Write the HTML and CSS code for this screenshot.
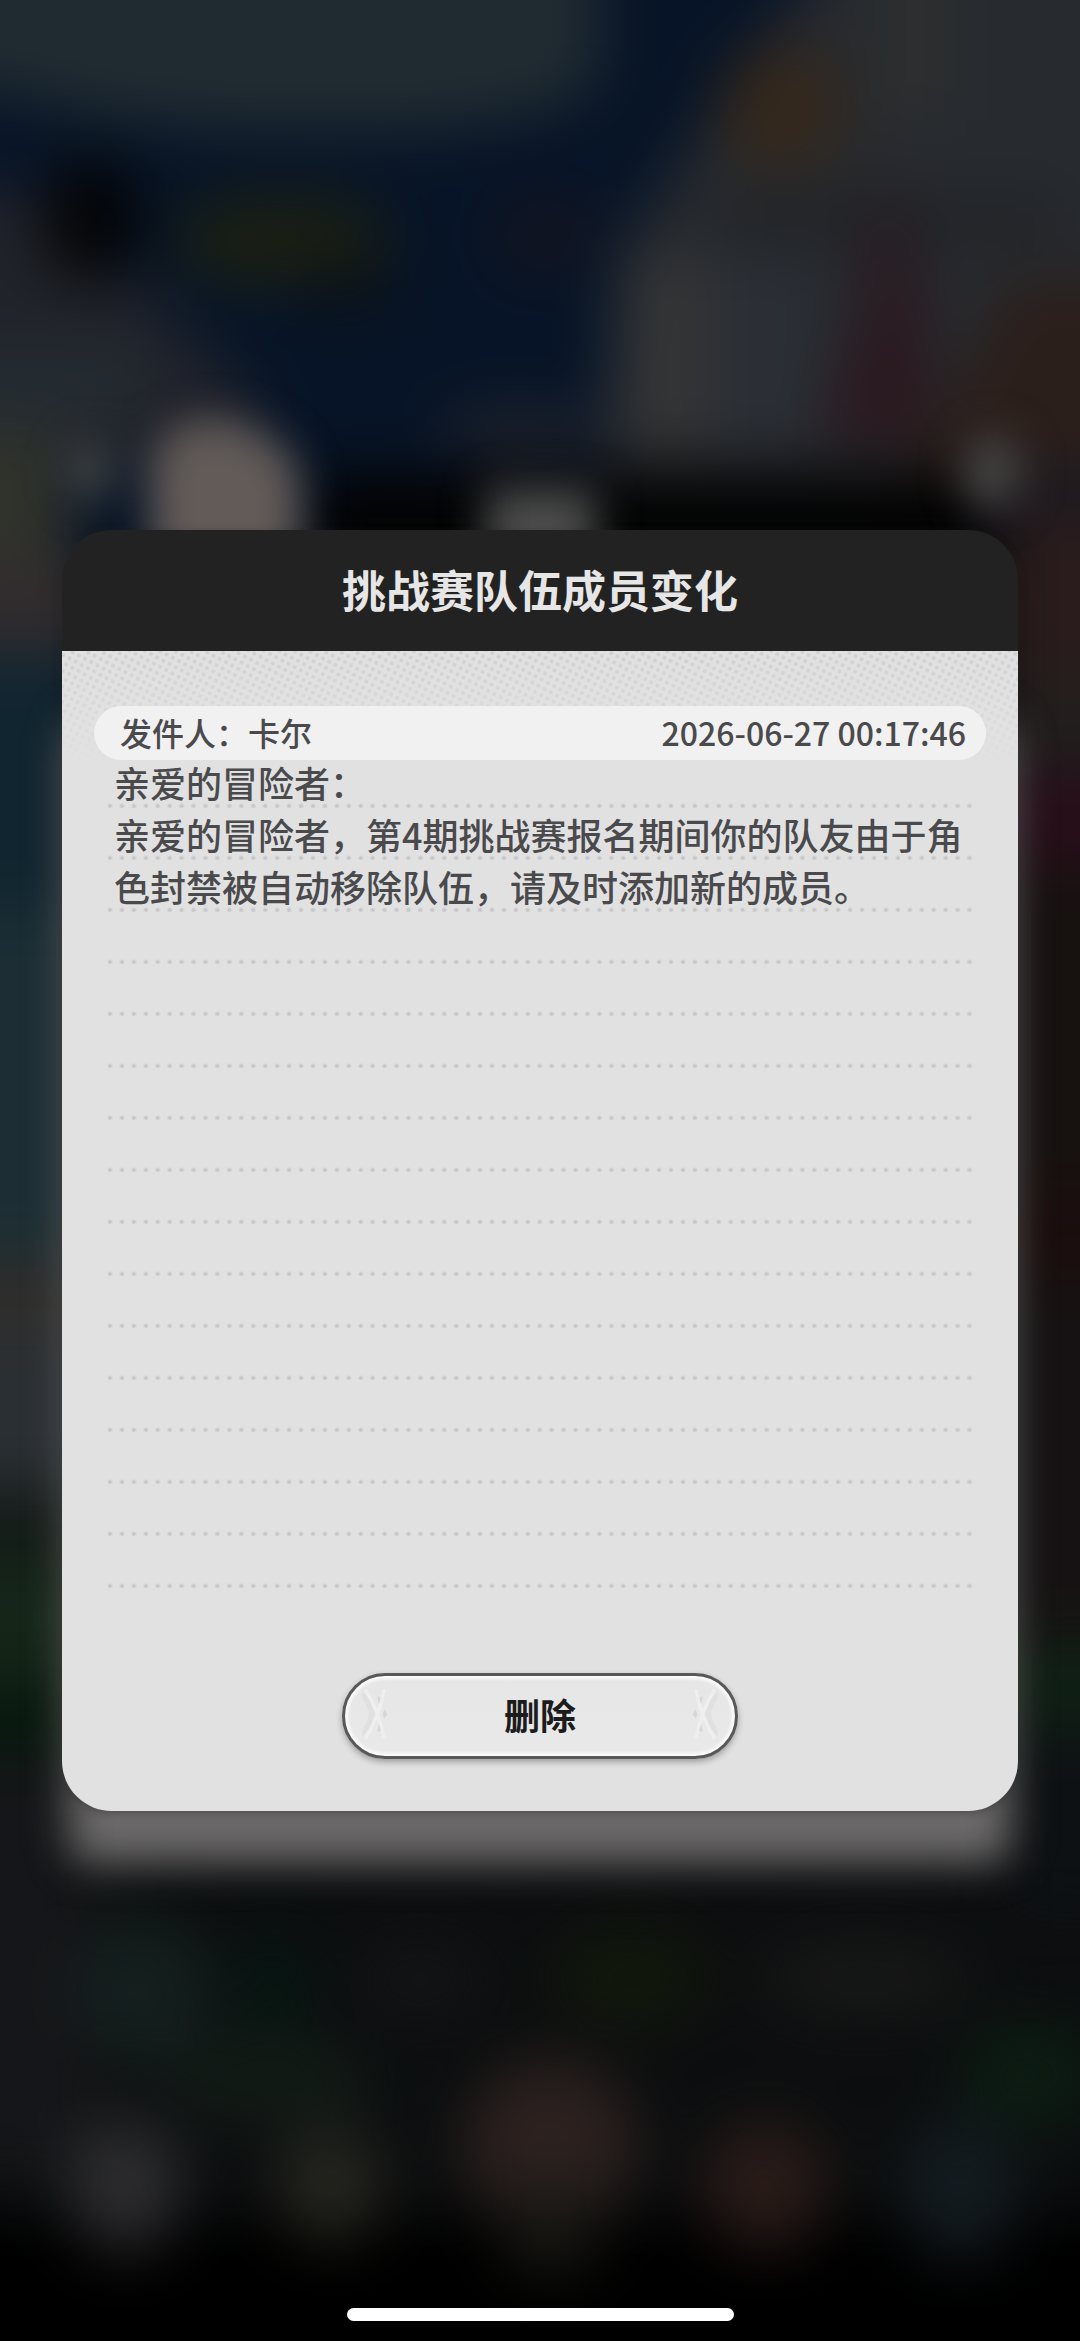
FILE: index.html
```html
<!DOCTYPE html>
<html lang="zh-CN">
<head>
<meta charset="utf-8">
<meta name="viewport" content="width=device-width, initial-scale=1">
<title>挑战赛队伍成员变化</title>
<link rel="stylesheet" href="styles.css">
</head>
<body>
<svg class="backdrop" viewBox="0 0 1080 2341" preserveAspectRatio="none" aria-hidden="true">
  <defs>
    <filter id="soft" x="-200" y="-200" width="1480" height="2741" filterUnits="userSpaceOnUse" color-interpolation-filters="sRGB"><feGaussianBlur stdDeviation="30"/></filter>
    <filter id="edge" x="-200" y="-200" width="1480" height="2741" filterUnits="userSpaceOnUse" color-interpolation-filters="sRGB"><feGaussianBlur stdDeviation="20"/></filter>
  </defs>
  <rect width="1080" height="2341" fill="#0c0e0f"/>
  <!-- scene behind the dialog -->
  <g filter="url(#soft)">
    <rect x="-80" y="-80" width="1240" height="640" fill="#071427"/>
    <path d="M-80-80H600V80Q560 130 330 132Q100 128 40 100L-80 80Z" fill="#202b31"/>
    <path d="M850-80H1160V480H600L620 250 700 130Z" fill="#272a2f"/>
    <rect x="880" y="-80" width="70" height="200" fill="#2d2f2f"/>
    <rect x="620" y="255" width="90" height="190" fill="#343536"/>
    <rect x="720" y="260" width="90" height="180" fill="#2b2f36"/>
    <rect x="720" y="200" width="340" height="40" fill="#202225"/>
    <ellipse cx="782" cy="108" rx="62" ry="66" fill="#34281c"/>
    <path d="M880 170L920 300 930 440H820L865 320Z" fill="#2b171e"/>
    <path d="M1010 280H1160V480H900L960 380Z" fill="#2b1f1b"/>
    <path d="M-80 190H40L160 300 270 420 240 470H-80Z" fill="#21232b"/>
    <rect x="-80" y="350" width="220" height="70" fill="#242c32"/>
    <ellipse cx="92" cy="220" rx="48" ry="62" fill="#030405"/>
    <ellipse cx="280" cy="240" rx="110" ry="46" fill="#1b2012"/>
    <ellipse cx="345" cy="285" rx="50" ry="25" fill="#0c1114"/>
    <ellipse cx="545" cy="235" rx="50" ry="40" fill="#131420"/>
    <ellipse cx="520" cy="435" rx="80" ry="24" fill="#22242b"/>
    <rect x="310" y="474" width="680" height="86" fill="#020202"/>
    <rect x="-80" y="430" width="150" height="140" fill="#30332b"/>
    <rect x="-80" y="560" width="180" height="90" fill="#322c2e"/>
    <rect x="-80" y="650" width="180" height="260" fill="#112530"/>
    <rect x="-80" y="910" width="180" height="350" fill="#1c2e34"/>
    <rect x="-80" y="1260" width="180" height="70" fill="#2f2d2a"/>
    <rect x="-80" y="1330" width="180" height="160" fill="#2a2f33"/>
    <rect x="-80" y="1490" width="180" height="70" fill="#131a17"/>
    <rect x="-80" y="1560" width="180" height="120" fill="#152619"/>
    <rect x="-80" y="1680" width="180" height="80" fill="#08180e"/>
    <rect x="-80" y="1760" width="180" height="420" fill="#151619"/>
    <rect x="1000" y="500" width="160" height="180" fill="#2a1c1c"/>
    <rect x="1000" y="680" width="160" height="90" fill="#221f1e"/>
    <rect x="1000" y="775" width="160" height="85" fill="#2a0e1b"/>
    <rect x="1000" y="860" width="160" height="330" fill="#171110"/>
    <rect x="1000" y="1190" width="160" height="90" fill="#1b0e0d"/>
    <rect x="1000" y="1280" width="160" height="360" fill="#161213"/>
    <rect x="1000" y="1640" width="160" height="90" fill="#0f2014"/>
    <rect x="1000" y="1730" width="160" height="190" fill="#0e1114"/>
    <rect x="-80" y="2215" width="1240" height="240" fill="#000"/>
    <ellipse cx="145" cy="1990" rx="70" ry="75" fill="#141f1e"/>
    <ellipse cx="275" cy="1985" rx="35" ry="50" fill="#061812"/>
    <ellipse cx="420" cy="1980" rx="65" ry="35" fill="#151517"/>
    <ellipse cx="630" cy="1978" rx="80" ry="50" fill="#12180c"/>
    <ellipse cx="865" cy="1978" rx="110" ry="45" fill="#161716"/>
    <ellipse cx="270" cy="2080" rx="110" ry="45" fill="#121b16"/>
    <ellipse cx="1030" cy="2075" rx="75" ry="55" fill="#0c1c13"/>
    <ellipse cx="550" cy="2145" rx="88" ry="88" fill="#2c211f"/>
    <ellipse cx="550" cy="2230" rx="50" ry="45" fill="#171713"/>
    <ellipse cx="125" cy="2185" rx="58" ry="66" fill="#2d2d30"/>
    <ellipse cx="330" cy="2185" rx="54" ry="56" fill="#262620"/>
    <ellipse cx="765" cy="2185" rx="62" ry="64" fill="#2a1c19"/>
    <ellipse cx="960" cy="2190" rx="58" ry="68" fill="#141c21"/>
  </g>
  <g filter="url(#edge)">
    <path d="M150 590V465Q160 418 220 418Q270 425 300 470V590Z" fill="#625b58"/>
    <rect x="486" y="488" width="110" height="100" fill="#4c4c4c"/>
    <ellipse cx="992" cy="472" rx="30" ry="38" fill="#464444"/>
    <ellipse cx="90" cy="470" rx="22" ry="30" fill="#404446"/>
    <rect x="68" y="720" width="944" height="1144" rx="24" fill="#6c6a6a"/>
  </g>
</svg>

<main class="screen">
  <section class="dialog" role="dialog" aria-labelledby="dialog-title">
    <header class="dialog-head">
      <h1 id="dialog-title">挑战赛队伍成员变化</h1>
    </header>
    <div class="dialog-body">
      <svg class="halftone" aria-hidden="true">
        <defs>
          <pattern id="dots" width="7" height="7" patternUnits="userSpaceOnUse" patternTransform="rotate(28)">
            <circle cx="3" cy="3" r="2" fill="#d0d0d2"/>
          </pattern>
        </defs>
        <rect width="100%" height="100%" fill="url(#dots)"/>
      </svg>
      <div class="meta">
        <span>发件人：卡尔</span>
        <time datetime="2026-06-27T00:17:46">2026-06-27 00:17:46</time>
      </div>
      <div class="letter">
        <p>亲爱的冒险者：</p>
        <p>亲爱的冒险者，第4期挑战赛报名期间你的队友由于角色封禁被自动移除队伍，请及时添加新的成员。</p>
      </div>
      <button class="delete" type="button">
        <svg class="flourish" viewBox="0 0 40 70" aria-hidden="true">
          <path d="M6 8Q24 28 24 35T6 62V54Q14 42 14 35T6 16Z" fill="#e0e0e0"/>
          <path d="M24 14L32 16 26 26ZM24 56L32 54 26 44ZM32 30L36 35 32 40 30 35Z" fill="#d6d6d6"/>
          <path d="M10 6Q27 35 32 64M32 6Q27 35 10 64" fill="none" stroke="#efefef" stroke-width="4"/>
        </svg>
        <span>删除</span>
        <svg class="flourish flipped" viewBox="0 0 40 70" aria-hidden="true">
          <path d="M6 8Q24 28 24 35T6 62V54Q14 42 14 35T6 16Z" fill="#e0e0e0"/>
          <path d="M24 14L32 16 26 26ZM24 56L32 54 26 44ZM32 30L36 35 32 40 30 35Z" fill="#d6d6d6"/>
          <path d="M10 6Q27 35 32 64M32 6Q27 35 10 64" fill="none" stroke="#efefef" stroke-width="4"/>
        </svg>
      </button>
    </div>
  </section>
</main>
<div class="home-indicator"></div>
</body>
</html>
```

FILE: styles.css
```css
* {
  box-sizing: border-box;
}

body {
  position: relative;
  margin: 0;
  min-height: 100vh;
  background: #000;
  color: #4a4a4c;
  font-family: "Noto Sans CJK SC", sans-serif;
  font-weight: 500;
}

.backdrop {
  position: absolute;
  inset: 0;
  width: 100%;
  height: 100%;
}

.screen {
  position: relative;
  display: flex;
  align-items: center;
  min-height: 100vh;
  padding: 0 62px;
}

.dialog {
  flex: 1;
  overflow: hidden;
  border-radius: 50px;
  background: linear-gradient(#222 121px, #e1e1e2 121px);
  box-shadow: 0 2px 8px rgba(34, 34, 34, 0.4);
}

.dialog-head {
  display: flex;
  align-items: center;
  justify-content: center;
  height: 121px;
  padding-bottom: 4px;
}

.dialog-head h1 {
  margin: 0;
  color: #e6e6e6;
  font-size: 44px;
  font-weight: 700;
  line-height: 64px;
}

.dialog-body {
  position: relative;
  display: flex;
  flex-direction: column;
  padding: 55px 32px 52px;
}

.halftone {
  position: absolute;
  top: 0;
  left: 0;
  width: 100%;
  height: 110px;
  mask-image: linear-gradient(#000, transparent);
}

.meta {
  position: relative;
  display: flex;
  align-items: center;
  justify-content: space-between;
  height: 54px;
  padding: 0 20px 2px 26px;
  border-radius: 27px;
  background: #f1f1f2;
  font-size: 32px;
}

.letter {
  position: relative;
  min-height: 832px;
  margin: -4px 10px 0;
  padding: 0 10px;
  background: radial-gradient(circle at 6px 50px, #c6c6c8 1px, transparent 3px) 0 0 / 12px 52px round repeat;
  font-size: 36px;
  line-height: 52px;
}

.letter p {
  margin: 0;
}

.delete {
  display: flex;
  align-items: center;
  justify-content: space-between;
  align-self: center;
  width: 396px;
  height: 86px;
  margin-top: 85px;
  padding: 0 12px 4px;
  border: 3px solid #58585a;
  border-radius: 43px;
  background: linear-gradient(#e6e6e6, #e9e9e9);
  box-shadow: inset 0 0 3px 3px #fbfbfb, 0 3px 6px rgba(0, 0, 0, 0.3);
  color: #1c1c1d;
  font: inherit;
  font-size: 36px;
  font-weight: 700;
}

.flourish {
  width: 34px;
  height: 62px;
}

.flipped {
  transform: scaleX(-1);
}

.home-indicator {
  position: absolute;
  bottom: 20px;
  left: 50%;
  width: 387px;
  height: 13px;
  margin-left: -193px;
  border-radius: 7px;
  background: #fff;
}
```
